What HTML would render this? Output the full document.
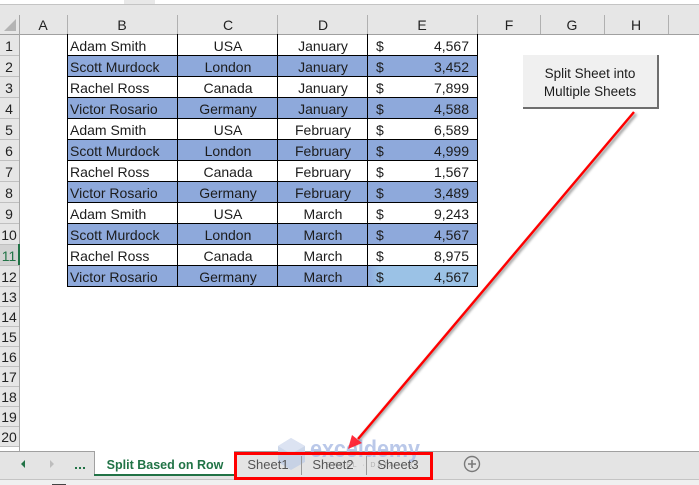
<!DOCTYPE html>
<html><head><meta charset="utf-8"><style>
html,body{margin:0;padding:0;background:#fff;width:699px;height:485px;overflow:hidden}
svg{display:block}
text{font-family:"Liberation Sans",sans-serif;font-size:14px;fill:#1c1c1c}
.c{text-anchor:middle}.r{text-anchor:end}
.h{font-size:14px;text-anchor:middle;fill:#222}
.n{font-size:14px;text-anchor:middle;fill:#222}
</style></head><body>
<svg width="699" height="485" viewBox="0 0 699 485" xmlns="http://www.w3.org/2000/svg">
<defs><filter id="b" x="-10%" y="-10%" width="120%" height="120%"><feGaussianBlur stdDeviation="1.2"/></filter>
<linearGradient id="g" x1="0" x2="1" y1="0" y2="0"><stop offset="0" stop-color="#8EA9DB"/><stop offset="0.12" stop-color="#9BC2E6"/><stop offset="1" stop-color="#9BC2E6"/></linearGradient></defs>
<rect width="699" height="485" fill="#fff"/>
<!-- top strip -->
<rect x="124" y="0" width="31" height="4" fill="#e8e8e8"/>
<rect x="0" y="4" width="699" height="1" fill="#c4c4c4"/>
<rect x="0" y="5" width="699" height="29" fill="#e6e6e6"/>
<rect x="0" y="34" width="699" height="1" fill="#a0a0a0"/>
<rect x="0" y="35" width="19" height="412" fill="#e6e6e6"/>
<rect x="19" y="15" width="1" height="436" fill="#a6a6a6"/>
<polygon points="4,31 16,31 16,19" fill="#b4b4b4"/>
<g fill="#b0b0b0"><rect x="67" y="15" width="1" height="19"/><rect x="177" y="15" width="1" height="19"/><rect x="277" y="15" width="1" height="19"/><rect x="367" y="15" width="1" height="19"/><rect x="477" y="15" width="1" height="19"/><rect x="540" y="15" width="1" height="19"/><rect x="604" y="15" width="1" height="19"/><rect x="668" y="15" width="1" height="19"/></g>
<g class="hd">
<text class="h" x="43" y="30">A</text><text class="h" x="122" y="30">B</text><text class="h" x="228" y="30">C</text><text class="h" x="323" y="30">D</text><text class="h" x="422" y="30">E</text><text class="h" x="509" y="30">F</text><text class="h" x="572" y="30">G</text><text class="h" x="636" y="30">H</text>
</g>
<!-- row header separators -->
<g fill="#c0c0c0"><rect y="55" width="19" height="1"/><rect y="76" width="19" height="1"/><rect y="97" width="19" height="1"/><rect y="118" width="19" height="1"/><rect y="139" width="19" height="1"/><rect y="160" width="19" height="1"/><rect y="181" width="19" height="1"/><rect y="202" width="19" height="1"/><rect y="223" width="19" height="1"/><rect y="244" width="19" height="1"/><rect y="265" width="19" height="1"/><rect y="286" width="19" height="1"/><rect y="306" width="19" height="1"/><rect y="326" width="19" height="1"/><rect y="346" width="19" height="1"/><rect y="366" width="19" height="1"/><rect y="386" width="19" height="1"/><rect y="406" width="19" height="1"/><rect y="426" width="19" height="1"/><rect y="446" width="19" height="1"/></g>
<rect x="0" y="245" width="18" height="20" fill="#d2d2d2"/>
<rect x="18" y="244" width="2" height="21" fill="#217346"/>
<text class="n" x="9" y="51">1</text><text class="n" x="9" y="72">2</text><text class="n" x="9" y="93">3</text><text class="n" x="9" y="114">4</text><text class="n" x="9" y="135">5</text><text class="n" x="9" y="156">6</text><text class="n" x="9" y="177">7</text><text class="n" x="9" y="198">8</text><text class="n" x="9" y="219">9</text><text class="n" x="9" y="240">10</text><text class="n" x="9" y="261" style="fill:#217346">11</text><text class="n" x="9" y="282">12</text><text class="n" x="9" y="302">13</text><text class="n" x="9" y="322">14</text><text class="n" x="9" y="342">15</text><text class="n" x="9" y="362">16</text><text class="n" x="9" y="382">17</text><text class="n" x="9" y="402">18</text><text class="n" x="9" y="422">19</text><text class="n" x="9" y="442">20</text>
<!-- table fills -->
<g fill="#8EA9DB"><rect x="67" y="55" width="410" height="21"/><rect x="67" y="97" width="410" height="21"/><rect x="67" y="139" width="410" height="21"/><rect x="67" y="181" width="410" height="21"/><rect x="67" y="223" width="410" height="21"/><rect x="67" y="265" width="410" height="21"/></g>
<rect x="367" y="265" width="110" height="21" fill="url(#g)"/>
<!-- grid -->
<g fill="#000"><rect x="67" y="34" width="1" height="253"/><rect x="177" y="34" width="1" height="253"/><rect x="277" y="34" width="1" height="253"/><rect x="367" y="34" width="1" height="253"/><rect x="477" y="34" width="1" height="253"/>
<rect x="67" y="55" width="411" height="1"/><rect x="67" y="76" width="411" height="1"/><rect x="67" y="97" width="411" height="1"/><rect x="67" y="118" width="411" height="1"/><rect x="67" y="139" width="411" height="1"/><rect x="67" y="160" width="411" height="1"/><rect x="67" y="181" width="411" height="1"/><rect x="67" y="202" width="411" height="1"/><rect x="67" y="223" width="411" height="1"/><rect x="67" y="244" width="411" height="1"/><rect x="67" y="265" width="411" height="1"/><rect x="67" y="286" width="411" height="1"/></g>
<!-- rows -->
<text x="70" y="51">Adam Smith</text><text class="c" x="228" y="51">USA</text><text class="c" x="323" y="51">January</text><text x="376" y="51">$</text><text class="r" x="469" y="51">4,567</text>
<text x="70" y="72">Scott Murdock</text><text class="c" x="228" y="72">London</text><text class="c" x="323" y="72">January</text><text x="376" y="72">$</text><text class="r" x="469" y="72">3,452</text>
<text x="70" y="93">Rachel Ross</text><text class="c" x="228" y="93">Canada</text><text class="c" x="323" y="93">January</text><text x="376" y="93">$</text><text class="r" x="469" y="93">7,899</text>
<text x="70" y="114">Victor Rosario</text><text class="c" x="228" y="114">Germany</text><text class="c" x="323" y="114">January</text><text x="376" y="114">$</text><text class="r" x="469" y="114">4,588</text>
<text x="70" y="135">Adam Smith</text><text class="c" x="228" y="135">USA</text><text class="c" x="323" y="135">February</text><text x="376" y="135">$</text><text class="r" x="469" y="135">6,589</text>
<text x="70" y="156">Scott Murdock</text><text class="c" x="228" y="156">London</text><text class="c" x="323" y="156">February</text><text x="376" y="156">$</text><text class="r" x="469" y="156">4,999</text>
<text x="70" y="177">Rachel Ross</text><text class="c" x="228" y="177">Canada</text><text class="c" x="323" y="177">February</text><text x="376" y="177">$</text><text class="r" x="469" y="177">1,567</text>
<text x="70" y="198">Victor Rosario</text><text class="c" x="228" y="198">Germany</text><text class="c" x="323" y="198">February</text><text x="376" y="198">$</text><text class="r" x="469" y="198">3,489</text>
<text x="70" y="219">Adam Smith</text><text class="c" x="228" y="219">USA</text><text class="c" x="323" y="219">March</text><text x="376" y="219">$</text><text class="r" x="469" y="219">9,243</text>
<text x="70" y="240">Scott Murdock</text><text class="c" x="228" y="240">London</text><text class="c" x="323" y="240">March</text><text x="376" y="240">$</text><text class="r" x="469" y="240">4,567</text>
<text x="70" y="261">Rachel Ross</text><text class="c" x="228" y="261">Canada</text><text class="c" x="323" y="261">March</text><text x="376" y="261">$</text><text class="r" x="469" y="261">8,975</text>
<text x="70" y="282">Victor Rosario</text><text class="c" x="228" y="282">Germany</text><text class="c" x="323" y="282">March</text><text x="376" y="282">$</text><text class="r" x="469" y="282">4,567</text>
<!-- button -->
<rect x="523" y="55" width="136" height="54" fill="#6e6e6e"/>
<rect x="523" y="55" width="134" height="52" fill="#f0f0f0"/>
<text class="c" x="590" y="78" style="font-size:13.5px">Split Sheet into</text>
<text class="c" x="590" y="96" style="font-size:13.5px">Multiple Sheets</text>
<!-- tab bar -->
<rect x="0" y="451" width="699" height="1" fill="#a0a0a0"/>
<rect x="0" y="452" width="699" height="27" fill="#e4e4e4"/>
<rect x="0" y="479" width="699" height="1" fill="#c4c4c4"/>
<rect x="0" y="480" width="699" height="5" fill="#f0f0f0"/>
<rect x="52" y="484" width="14" height="1" fill="#444"/>
<polygon points="21,464 25,460 25,468" fill="#217346"/>
<polygon points="54,464 50,460 50,468" fill="#bdbdbd"/>
<g fill="#217346"><rect x="75" y="467" width="2" height="2"/><rect x="79" y="467" width="2" height="2"/><rect x="83" y="467" width="2" height="2"/></g>
<rect x="94" y="451" width="1" height="25" fill="#a0a0a0"/>
<rect x="95" y="451" width="139" height="23" fill="#fff"/>
<rect x="94" y="474" width="140" height="2" fill="#217346"/>
<text class="c" x="165" y="469" style="font-size:12.5px;font-weight:bold;fill:#217346">Split Based on Row</text>
<circle cx="472" cy="464" r="7.5" fill="none" stroke="#7a7a7a" stroke-width="1.4"/>
<path d="M468 464h8M472 460v8" stroke="#7a7a7a" stroke-width="1.6"/>
<!-- watermark -->
<g opacity="0.85">
<polygon points="291,438 305,446 305,462 291,470 278,462 278,446" fill="#c3cfe6"/>
<polygon points="291,438 305,446 291,454 278,446" fill="#d7dff0"/>
<text x="310" y="457" style="font-size:24px;font-weight:bold;fill:#aebfe6" textLength="110" lengthAdjust="spacingAndGlyphs">exceldemy</text>
<text x="326" y="467" style="font-size:7px;fill:#aaa" textLength="90">EXCEL · DATA · BI</text>
</g>
<rect x="301" y="456" width="1" height="19" fill="#9a9a9a"/>
<rect x="366" y="456" width="1" height="19" fill="#9a9a9a"/>
<text class="c" x="268" y="469" style="font-size:13px;fill:#555">Sheet1</text>
<text class="c" x="333" y="469" style="font-size:13px;fill:#555">Sheet2</text>
<text class="c" x="398" y="469" style="font-size:13px;fill:#555">Sheet3</text>
<!-- red box -->
<rect x="235.5" y="453.5" width="196" height="25" fill="none" stroke="#ff0000" stroke-width="3"/>
<!-- arrow -->
<path d="M636 114L354 446" stroke="#777" stroke-width="3" fill="none" filter="url(#b)" opacity="0.7"/>
<path d="M634 112L358 439" stroke="#ff0000" stroke-width="2.4" fill="none"/>
<polygon points="348,449 352,435 362,443" fill="#ff2030" opacity="0.95"/>
</svg>
</body></html>
